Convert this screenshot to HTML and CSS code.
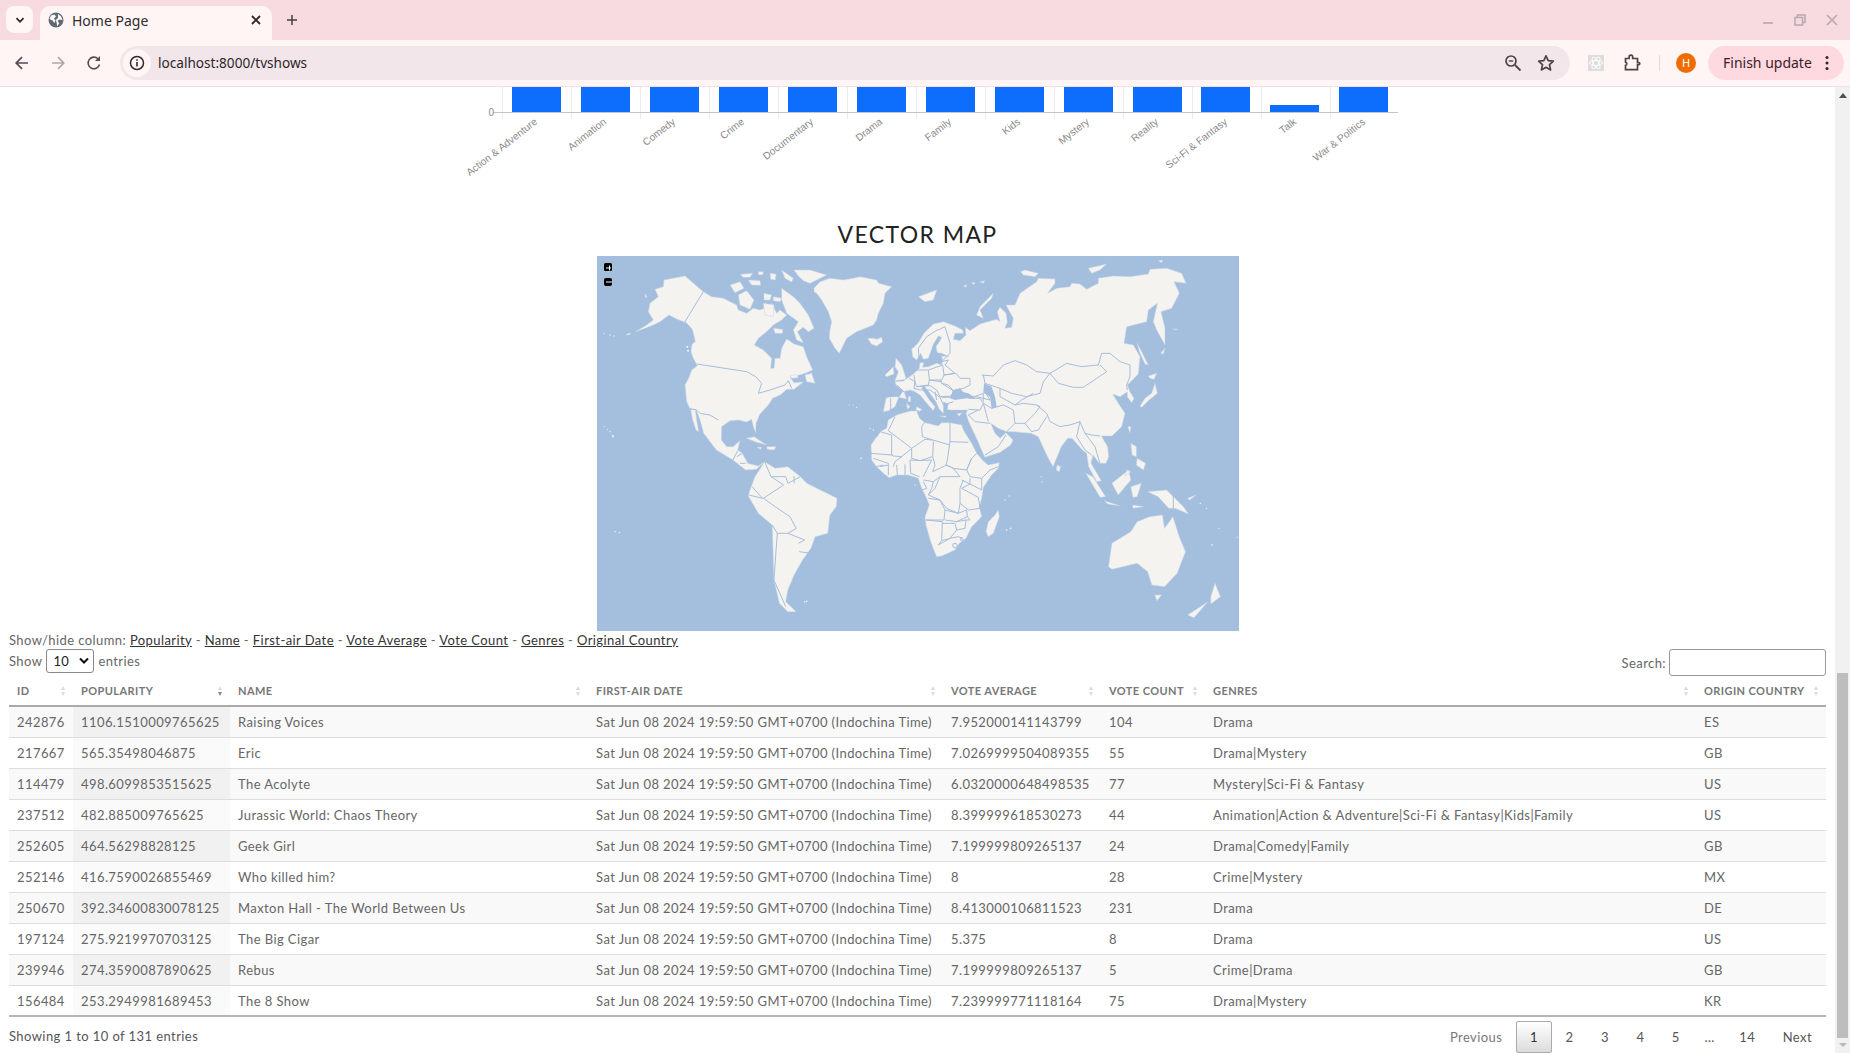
FILE: index.html
```html
<!DOCTYPE html>
<html lang="en">
<head>
<meta charset="utf-8">
<title>Home Page</title>
<link rel="stylesheet" href="styles.css">
</head>
<body>
<header class="chrome">
  <div class="tabstrip">
    <button class="tabsearch"><svg width="12" height="12" viewBox="0 0 12 12"><path d="M2.5 4.2 6 7.8l3.5-3.6" class="ic-b"/></svg></button>
    <div class="tab">
      <svg class="globe" width="16" height="16" viewBox="0 0 16 16"><circle cx="8" cy="8" r="7.5" fill="#5f6b73"/><path d="M3 3.5 6.5 2.5 8 4.5 6 6.5 7.5 8.5 6.5 11 4.5 8.5 1.5 7ZM10 2l3 2.2 1.6 4-2.6-.7-2.4.9 1.6 3.2-2 2.6-.6-3.6L7.8 8 10 6Z" fill="#fff5f5"/></svg>
      <span class="tab-title">Home Page</span>
      <svg class="tab-x" width="10" height="10" viewBox="0 0 10 10"><path d="M1 1l8 8M9 1 1 9" class="ic-b"/></svg>
    </div>
    <svg class="plus" width="12" height="12" viewBox="0 0 12 12"><path d="M6 1v10M1 6h10" stroke="#4a3f43" stroke-width="1.5" fill="none"/></svg>
    <div class="winctl">
      <svg width="12" height="12" viewBox="0 0 12 12"><path d="M1 9h10" stroke="#b9a9ad" stroke-width="1.6"/></svg>
      <svg width="12" height="12" viewBox="0 0 12 12"><path d="M3.5 1h7.5v7.5H8.5V11H1V3.5h2.5Z M3.5 3.5h5v5" fill="none" stroke="#b9a9ad" stroke-width="1.5"/></svg>
      <svg width="12" height="12" viewBox="0 0 12 12"><path d="M1 1l10 10M11 1 1 11" stroke="#b9a9ad" stroke-width="1.6"/></svg>
    </div>
  </div>
  <div class="toolbar">
    <svg class="nav" width="16" height="16" viewBox="0 0 16 16"><path d="M14 8H2.5M8 2.2 2.2 8 8 13.8" fill="none" stroke="#5b4a50" stroke-width="1.7"/></svg>
    <svg class="nav" width="16" height="16" viewBox="0 0 16 16"><path d="M2 8h11.5M8 2.2 13.8 8 8 13.8" fill="none" stroke="#b3a5a9" stroke-width="1.7"/></svg>
    <svg class="nav" width="16" height="16" viewBox="0 0 16 16"><path d="M13.5 9.5A5.8 5.8 0 1 1 12 3.8" fill="none" stroke="#5b4a50" stroke-width="1.6"/><path d="M14 1v5H9Z" fill="#5b4a50"/></svg>
    <div class="omnibox">
      <span class="site-info"><svg width="16" height="16" viewBox="0 0 16 16"><circle cx="8" cy="8" r="6.5" fill="none" stroke="#2f2a2c" stroke-width="1.5"/><path d="M8 7v4.5M8 4.2v1.6" stroke="#2f2a2c" stroke-width="1.6"/></svg></span>
      <span class="url">localhost:8000/tvshows</span>
      <svg class="omni-zoom" width="18" height="18" viewBox="0 0 18 18"><circle cx="7" cy="7" r="5" fill="none" stroke="#4d4347" stroke-width="1.7"/><path d="M11 11l5.5 5.5" stroke="#4d4347" stroke-width="1.8"/><path d="M4.8 7h4.4" stroke="#4d4347" stroke-width="1.4"/></svg>
      <svg class="omni-star" width="18" height="18" viewBox="0 0 18 18"><path d="M9 1.8l2.2 4.8 5.2.6-3.9 3.5 1.1 5.2L9 13.3l-4.6 2.6 1.1-5.2L1.600 7.200l5.200-.6Z" fill="none" stroke="#4d4347" stroke-width="1.7" stroke-linejoin="round"/></svg>
    </div>
    <span class="ext"><svg width="16" height="16" viewBox="0 0 16 16"><rect width="16" height="16" fill="#dedcdc"/><g fill="none" stroke="#fff" stroke-width=".9"><ellipse cx="8" cy="8" rx="6.500" ry="2.600"/><ellipse cx="8" cy="8" rx="6.500" ry="2.600" transform="rotate(60 8 8)"/><ellipse cx="8" cy="8" rx="6.500" ry="2.600" transform="rotate(120 8 8)"/></g></svg></span>
    <svg class="puzzle" width="18" height="18" viewBox="0 0 18 18"><path d="M2.500 4.500h3.600V3a1.800 1.800 0 0 1 3.600 0v1.500h4.800v4h1.200a1.100 1.100 0 0 1 0 2.200h-1.200v5H2.500v-4.200a1.700 1.700 0 0 0 0-3.300Z" fill="none" stroke="#4d4347" stroke-width="1.700"/></svg>
    <span class="sep"></span>
    <span class="avatar">H</span>
    <span class="update"><span>Finish update</span><svg width="4" height="16" viewBox="0 0 4 16"><circle cx="2" cy="2.500" r="1.500"/><circle cx="2" cy="8" r="1.500"/><circle cx="2" cy="13.500" r="1.500"/></svg></span>
  </div>
</header>

<div class="viewport">
  <main class="page">
    <svg class="chart" width="1835" height="103" viewBox="0 87 1835 103">
      <g class="grid">
        <path d="M502.500 87V119M571.500 87V119M640.500 87V119M709.500 87V119M778.500 87V119M847.500 87V119M916.500 87V119M985.500 87V119M1054.500 87V119M1123.500 87V119M1192.500 87V119M1261.500 87V119M1330.500 87V119"/>
      </g>
      <path class="axis" d="M493 112.500H1398"/>
      <g class="bars">
        <rect x="512" y="87" width="49" height="25"/><rect x="581" y="87" width="49" height="25"/><rect x="650" y="87" width="49" height="25"/><rect x="719" y="87" width="49" height="25"/><rect x="788" y="87" width="49" height="25"/><rect x="857" y="87" width="49" height="25"/><rect x="926" y="87" width="49" height="25"/><rect x="995" y="87" width="49" height="25"/><rect x="1064" y="87" width="49" height="25"/><rect x="1133" y="87" width="49" height="25"/><rect x="1201" y="87" width="49" height="25"/><rect x="1270" y="105" width="49" height="7"/><rect x="1339" y="87" width="49" height="25"/>
      </g>
      <g class="labels">
        <text x="494" y="116" class="zero">0</text>
        <text transform="translate(538 123) rotate(-38)">Action &amp; Adventure</text>
        <text transform="translate(607 123) rotate(-38)">Animation</text>
        <text transform="translate(676 123) rotate(-38)">Comedy</text>
        <text transform="translate(745 123) rotate(-38)">Crime</text>
        <text transform="translate(814 123) rotate(-38)">Documentary</text>
        <text transform="translate(883 123) rotate(-38)">Drama</text>
        <text transform="translate(952 123) rotate(-38)">Family</text>
        <text transform="translate(1021 123) rotate(-38)">Kids</text>
        <text transform="translate(1090 123) rotate(-38)">Mystery</text>
        <text transform="translate(1159 123) rotate(-38)">Reality</text>
        <text transform="translate(1228 123) rotate(-38)">Sci-Fi &amp; Fantasy</text>
        <text transform="translate(1297 123) rotate(-38)">Talk</text>
        <text transform="translate(1366 123) rotate(-38)">War &amp; Politics</text>
      </g>
    </svg>

    <h2 class="map-title">VECTOR MAP</h2>
    <div class="map-wrap">
      <svg class="map" width="642" height="375" viewBox="597 256 642 375">
        <rect x="597" y="256" width="642" height="375" class="water"/>
        <!-- Americas, Greenland: 3x crop coordinates from x=590,y=250 -->
        <g transform="translate(590 250) scale(.33333)">
          <path class="land" d="M135,246 L165,235 L190,225 L210,215 L237,195 L262,208 L285,217 L298,228 L308,240 L316,275 L306,283 L303,305 L310,325 L322,347 L305,360 L296,385 L285,405 L290,455 L300,476 L320,482 L330,510 L341,550 L379,600 L429,630 L467,660 L499,658 L524,635 L505,648 L473,640 L457,610 L443,600 L450,572 L429,590 L410,590 L394,570 L395,530 L420,512 L445,510 L470,516 L485,508 L490,530 L497,548 L498,520 L510,492 L535,465 L548,445 L572,434 L590,418 L612,418 L640,396 L612,398 L600,382 L640,372 L668,360 L650,320 L640,290 L612,282 L590,267 L575,295 L570,325 L555,325 L552,355 L542,355 L545,325 L520,300 L493,285 L505,265 L530,245 L550,225 L575,210 L590,195 L570,180 L560,190 L545,160 L535,170 L510,180 L490,175 L470,190 L445,180 L440,165 L420,155 L400,145 L365,140 L340,125 L285,78 L222,90 L220,110 L195,118 L205,140 L180,160 L175,185 L190,210 L170,225 Z"/>
          <path class="land" d="M302,478 L316,480 L320,510 L326,545 L318,540 L308,510 Z"/>
          <path class="land" d="M575,115 L610,140 L630,160 L655,195 L672,235 L655,245 L640,232 L622,245 L640,278 L620,270 L610,240 L625,215 L590,190 L575,150 Z"/>
          <path class="land" d="M445,135 L470,122 L492,150 L480,178 L450,165 Z M420,105 L450,95 L462,115 L435,128 Z M452,73 L488,70 L480,82 L458,82 Z M475,90 L510,92 L512,106 L485,105 Z M505,65 L520,65 L518,74 L505,74 Z M540,70 L558,72 L556,90 L542,88 Z M575,60 L610,85 L605,96 L585,85 Z M612,60 L660,60 L710,75 L660,100 L640,92 L625,78 Z M522,130 L545,135 L540,150 L522,150 Z M550,140 L575,145 L570,155 L550,152 Z M520,160 L552,165 L550,200 L525,195 Z M550,235 L578,238 L578,250 L556,250 Z"/>
          <path class="land" d="M672,115 L690,95 L720,85 L760,90 L790,85 L810,80 L860,90 L866,100 L905,110 L885,130 L880,160 L865,190 L860,210 L850,225 L800,245 L770,265 L748,310 L735,295 L718,265 L720,240 L725,215 L715,185 L695,150 L680,130 L672,125 Z"/>
          <path class="land" d="M833,265 L850,265 L860,268 L875,262 L878,275 L860,288 L845,283 Z M645,375 L665,370 L675,400 L650,395 Z M165,132 L172,142 L166,142 Z M600,378 L620,373 L625,383 L605,385 Z"/>
          <path class="land" d="M470,565 L492,560 L530,585 L500,577 Z M530,590 L558,590 L552,600 L532,598 Z M502,592 L515,592 L512,598 Z"/>
          <path class="land" d="M918,325 L935,345 L945,375 L948,388 L915,392 L925,365 L915,350 Z M885,375 L910,350 L912,372 L890,380 Z"/>
          <g class="dots"><circle cx="42" cy="530" r="1.800"/><circle cx="52" cy="538" r="1.800"/><circle cx="60" cy="545" r="2"/><path d="M65 552l8 7-5 5Z"/><circle cx="42" cy="250" r="2"/><circle cx="60" cy="255" r="2"/><circle cx="72" cy="258" r="2"/><path d="M108 254l12-5 2 3-12 4Z"/><circle cx="292" cy="290" r="3"/><circle cx="294" cy="302" r="3"/><circle cx="778" cy="465" r="1.800"/><circle cx="790" cy="465" r="1.800"/><circle cx="800" cy="472" r="1.800"/></g>
          <path class="border" d="M340,125 L285,215 L298,230 L310,275 M320,342 L470,365 L497,380 L515,400 L505,430 L540,420 L585,405 L595,392 L605,415 M300,476 L320,480 L330,490 L360,495 L385,510 M443,602 L429,630 M457,610 L440,620 M467,640 L450,640"/>
        </g>
        <!-- Eurasia: 3x crop coordinates from x=900,y=250 -->
        <g transform="translate(900 250) scale(.33333)">
          <path class="land" d="M-35,442 L-10,440 L20,447 L12,425 L-12,405 L-15,395 L10,393 L22,385 L40,372 L58,355 L60,338 L72,338 L68,352 L85,350 L110,340 L125,345 L128,330 L125,318 L148,320 L125,310 L112,308 L108,290 L120,272 L125,262 L115,258 L100,283 L92,305 L85,325 L70,328 L62,310 L50,330 L38,320 L35,298 L55,278 L72,250 L100,222 L130,215 L165,228 L188,240 L190,250 L165,250 L160,268 L180,272 L198,255 L196,232 L210,242 L240,222 L290,208 L300,215 L292,185 L300,172 L318,190 L322,215 L315,235 L335,232 L340,205 L318,165 L345,165 L360,130 L410,95 L415,85 L465,87 L465,100 L443,130 L470,115 L510,110 L515,100 L540,102 L560,118 L595,100 L595,85 L640,78 L690,80 L745,72 L750,58 L800,55 L845,70 L858,100 L822,95 L838,130 L815,175 L783,185 L795,235 L795,285 L770,240 L760,215 L772,160 L745,180 L740,215 L680,230 L672,280 L700,285 L720,320 L715,372 L692,395 L682,405 L690,425 L702,445 L695,458 L682,440 L682,425 L660,440 L638,432 L655,460 L675,490 L665,530 L636,558 L604,558 L623,590 L626,620 L618,640 L598,640 L579,615 L573,640 L604,692 L590,695 L566,650 L560,610 L547,600 L534,585 L516,565 L503,565 L484,590 L459,650 L440,615 L415,560 L393,550 L340,545 L320,545 L295,535 L272,520 L285,550 L300,565 L318,548 L339,570 L332,585 L301,607 L254,622 L232,570 L206,515 L198,490 L203,480 L150,480 L142,478 L145,462 L130,455 L130,490 L118,478 L108,455 L90,430 L70,405 L65,415 L88,450 L105,470 L100,482 L85,465 L60,435 L45,425 L30,420 L8,425 L-5,445 L-15,470 L-35,482 L-50,485 L-42,445 Z"/>
          <path class="sea" d="M160,420 L180,415 L190,427 L205,430 L228,445 L200,445 L165,450 L150,445 Z M252,400 L275,410 L285,440 L290,470 L275,476 L270,440 L250,428 Z"/>
          <path class="land" d="M720,468 L735,445 L755,430 L765,400 L772,430 L745,452 L725,472 Z M745,378 L770,370 L762,388 L750,385 Z M712,280 L745,345 L735,342 L718,305 Z M782,310 L795,295 L790,312 Z M280,130 L240,170 L230,195 L250,205 L240,180 L275,145 Z M55,140 L110,120 L100,150 L75,155 Z M362,65 L375,60 L395,65 L415,70 L405,80 L370,75 Z M190,108 L200,104 L198,112 Z M215,98 L226,98 L220,104 Z M240,96 L254,92 L250,100 Z M565,55 L620,42 L600,60 L575,70 Z M775,33 L788,30 L785,38 Z M818,236 L832,238 L828,240 Z M20,460 L30,470 L22,478 Z M50,470 L65,478 L60,484 L48,480 Z M25,440 L32,440 L32,455 L25,455 Z M120,498 L140,498 L135,502 Z M170,492 L186,488 L178,498 Z"/>
          <path class="border" d="M245,375 L280,378 L310,345 L345,332 L380,345 L410,365 L450,370 L500,340 L545,350 L595,345 L605,310 L630,310 L660,335 L690,345 L690,380 L680,405 L682,420 M450,370 L475,400 L520,412 L550,412 L590,385 L620,365 L600,345 M250,375 L255,400 L300,415 L335,430 L380,440 L420,430 L430,395 L450,370 M300,415 L300,440 L345,465 L365,450 L400,430 M250,460 L275,475 L310,465 L340,480 L345,520 L320,545 M345,520 L375,520 L405,490 L420,470 L410,465 L370,460 L345,465 M410,465 L440,490 L450,515 L480,530 L510,525 L540,515 L555,550 L575,555 L600,558 M440,500 L415,540 L395,545 L375,520 M540,515 L530,560 L555,600 L575,615 M555,550 L585,590 L600,640 M205,478 L240,480 L250,460 L240,445 L205,445 M225,440 L250,430 L250,455 M205,495 L235,480 M205,495 L225,515 L270,520 M255,615 L295,590 L318,555 M250,460 L265,515 M-28,445 L-28,482 M-10,405 L12,425"/>
        </g>
        <!-- Europe borders: 3x crop coordinates from x=870,y=320 -->
        <g transform="translate(870 320) scale(.33333)">
          <path class="border" d="M118,175 L135,185 L132,205 L150,210 M135,150 L175,150 L178,180 L175,195 L140,200 L135,185 L132,165 M175,150 L218,135 L222,165 L215,180 L178,180 M215,125 L235,120 L225,135 L255,160 L222,165 M222,165 L258,160 L270,175 L300,175 L300,195 L280,205 L250,212 L235,195 L215,190 L213,180 M215,190 L250,212 L245,228 L210,230 L200,210 M178,180 L213,185 M140,200 L180,197 L200,210 M150,210 L180,210 M180,210 L210,232 L220,255 L250,245 M215,232 L245,232 M195,215 L200,240 M205,28 L170,50 L145,85 L148,125 M225,20 L240,70 L240,100 M205,30 L225,20 M215,125 L240,100 M310,228 L360,240 L345,215"/>
        </g>
        <!-- Africa: 3x crop coordinates from x=860,y=410 -->
        <g transform="translate(860 410) scale(.33333)">
          <path class="land" d="M85,30 L110,15 L150,3 L172,3 L180,25 L195,38 L235,48 L245,38 L270,38 L305,45 L310,60 L335,100 L350,130 L372,155 L385,165 L418,158 L415,175 L395,195 L370,232 L365,265 L358,290 L365,320 L335,350 L318,385 L298,400 L285,420 L245,438 L230,440 L225,428 L212,395 L198,345 L195,320 L208,285 L200,265 L185,235 L175,205 L145,195 L110,195 L88,203 L70,190 L50,170 L35,150 L33,105 L50,80 L60,65 L80,55 Z"/>
          <path class="land" d="M415,300 L418,320 L400,370 L385,380 L378,365 L385,335 L405,315 Z"/>
          <g class="dots"><circle cx="435" cy="270" r="2"/><circle cx="448" cy="258" r="2"/><circle cx="440" cy="360" r="2.500"/><circle cx="452" cy="355" r="2.500"/><circle cx="30" cy="55" r="2"/><circle cx="40" cy="60" r="2"/><circle cx="3" cy="145" r="2.500"/><circle cx="165" cy="225" r="2"/><circle cx="180" cy="208" r="2.500"/></g>
          <path class="border" d="M105,20 L85,62 L155,115 L195,88 L218,90 M172,5 L180,25 L195,35 L185,50 L187,80 L218,90 M270,38 L270,95 L325,97 M218,90 L270,105 M270,95 L262,150 L258,165 L280,175 L320,180 L335,145 L350,130 M220,95 L218,140 L225,165 L218,185 M155,115 L155,145 L180,152 L218,140 M33,130 L95,135 L95,75 M95,135 L100,138 L125,140 L155,115 M50,80 L60,65 L95,75 M40,145 L85,160 L85,195 M110,165 L112,195 M125,140 L105,155 L100,170 M135,163 L135,195 M150,150 L152,190 L178,200 M60,170 L85,165 M50,170 L70,165 M150,150 L180,152 L215,150 L190,200 M218,185 L260,165 L280,175 L300,200 L240,200 L220,215 L190,210 M320,180 L330,200 L365,205 L390,180 L415,170 M335,145 L320,180 M365,205 L365,240 L330,222 L330,205 M240,200 L225,235 L205,255 L240,270 L260,295 L295,310 L300,280 L300,235 L310,210 M305,210 L330,222 L305,235 M305,235 L355,262 L360,295 L325,300 L300,280 M205,265 L240,270 L255,300 L252,330 L198,330 M255,300 L295,310 L320,300 L322,320 L290,335 L255,330 M198,330 L247,335 L245,392 L235,405 M247,340 L285,340 M245,392 L270,385 L290,360 L285,340 M290,335 L318,330 L315,355 L290,360 M322,320 L330,330 L318,330 M235,405 L270,385 L295,380 L308,385 M190,215 L200,235 L185,240 M205,255 L215,235 L220,215"/>
          <circle cx="285" cy="407" r="7" class="border"/><circle cx="305" cy="388" r="4" class="border"/>
        </g>
        <!-- South America, Oceania: crop coordinates, x/2.376, y/3 from x=590,y=250 -->
        <g transform="translate(590 250) scale(.42088 .33333)">
          <path class="land" d="M380,720 L392,680 L415,635 L440,655 L470,650 L500,680 L515,700 L587,745 L585,770 L570,795 L565,850 L535,860 L525,895 L505,930 L485,975 L470,1020 L465,1055 L490,1085 L470,1085 L450,1060 L437,990 L433,825 L400,790 L376,738 Z"/>
          <path class="land" d="M1240,880 L1285,845 L1300,815 L1330,800 L1360,795 L1365,835 L1385,800 L1400,860 L1415,905 L1395,970 L1365,1010 L1335,1005 L1325,965 L1300,940 L1240,958 L1232,950 Z M1342,1035 L1358,1035 L1347,1052 Z M1485,1000 L1498,1040 L1475,1062 L1475,1040 Z M1468,1055 L1435,1103 L1420,1095 L1445,1075 Z"/>
          <path class="land" d="M1178,670 L1195,680 L1225,740 L1212,742 Z M1222,752 L1260,768 L1230,762 Z M1240,700 L1280,660 L1285,690 L1255,735 Z M1285,710 L1310,700 L1300,740 L1290,742 Z M1325,725 L1370,720 L1410,770 L1422,792 L1390,775 L1375,775 L1350,740 Z M1285,580 L1298,590 L1298,620 L1288,615 Z M1300,625 L1320,640 L1315,660 L1298,645 Z M1278,530 L1285,530 L1283,548 Z M1110,645 L1118,650 L1115,665 L1108,660 Z M1275,660 L1285,665 L1272,678 Z M1290,765 L1315,770 L1290,775 Z M1420,745 L1440,735 L1425,750 Z"/>
          <path class="border" d="M415,635 L430,680 L460,705 L412,745 M412,745 L440,770 L475,800 L490,835 L470,850 L445,850 L433,825 M430,680 L465,680 L470,700 L500,680 M485,678 L485,700 M470,850 L510,870 L495,880 M497,905 L525,910 M385,710 L410,745 L378,735 M445,850 L437,990 L465,1070 M1386,725 L1386,775"/>
          <g class="dots"><circle cx="1072" cy="680" r="1.600"/><circle cx="1074" cy="695" r="1.600"/><circle cx="60" cy="845" r="2"/><circle cx="70" cy="848" r="2"/><circle cx="510" cy="1056" r="2.200"/><circle cx="515" cy="1054" r="2.200"/><circle cx="1450" cy="760" r="1.800"/><circle cx="1465" cy="775" r="1.800"/><circle cx="1478" cy="885" r="2.200"/><circle cx="1495" cy="835" r="1.500"/><circle cx="1538" cy="862" r="1.500"/></g>
        </g>
        <g class="zoomctl">
          <rect x="604" y="263" width="8" height="8" rx="1.500"/><path d="M606 268h5M609.500 265.500v5"/>
          <rect x="604" y="278" width="8" height="8" rx="2"/><path d="M606 282h6"/>
        </g>
      </svg>
    </div>

    <p class="toggle">Show/hide column: <a>Popularity</a> - <a>Name</a> - <a>First-air Date</a> - <a>Vote Average</a> - <a>Vote Count</a> - <a>Genres</a> - <a>Original Country</a></p>

    <div class="dt-top">
      <label class="dt-len">Show <span class="select"><span>10</span><svg width="10" height="8" viewBox="0 0 10 8"><path d="M1 1.500 5 5.500 9 1.500" fill="none" stroke="#111" stroke-width="2"/></svg></span> entries</label>
      <label class="dt-search">Search: <span class="input"></span></label>
    </div>

    <table class="dt">
      <colgroup><col class="c1"><col class="c2"><col class="c3"><col class="c4"><col class="c5"><col class="c6"><col class="c7"><col class="c8"></colgroup>
      <thead><tr>
        <th class="s">ID</th><th class="s desc">Popularity</th><th class="s">Name</th><th class="s">First-air Date</th><th class="s">Vote Average</th><th class="s">Vote Count</th><th class="s">Genres</th><th class="s">Origin Country</th>
      </tr></thead>
      <tbody>
        <tr><td>242876</td><td class="sorted">1106.1510009765625</td><td>Raising Voices</td><td>Sat Jun 08 2024 19:59:50 GMT+0700 (Indochina Time)</td><td>7.952000141143799</td><td>104</td><td>Drama</td><td>ES</td></tr>
        <tr><td>217667</td><td class="sorted">565.35498046875</td><td>Eric</td><td>Sat Jun 08 2024 19:59:50 GMT+0700 (Indochina Time)</td><td>7.0269999504089355</td><td>55</td><td>Drama|Mystery</td><td>GB</td></tr>
        <tr><td>114479</td><td class="sorted">498.6099853515625</td><td>The Acolyte</td><td>Sat Jun 08 2024 19:59:50 GMT+0700 (Indochina Time)</td><td>6.0320000648498535</td><td>77</td><td>Mystery|Sci-Fi &amp; Fantasy</td><td>US</td></tr>
        <tr><td>237512</td><td class="sorted">482.885009765625</td><td>Jurassic World: Chaos Theory</td><td>Sat Jun 08 2024 19:59:50 GMT+0700 (Indochina Time)</td><td>8.399999618530273</td><td>44</td><td>Animation|Action &amp; Adventure|Sci-Fi &amp; Fantasy|Kids|Family</td><td>US</td></tr>
        <tr><td>252605</td><td class="sorted">464.56298828125</td><td>Geek Girl</td><td>Sat Jun 08 2024 19:59:50 GMT+0700 (Indochina Time)</td><td>7.199999809265137</td><td>24</td><td>Drama|Comedy|Family</td><td>GB</td></tr>
        <tr><td>252146</td><td class="sorted">416.7590026855469</td><td>Who killed him?</td><td>Sat Jun 08 2024 19:59:50 GMT+0700 (Indochina Time)</td><td>8</td><td>28</td><td>Crime|Mystery</td><td>MX</td></tr>
        <tr><td>250670</td><td class="sorted">392.34600830078125</td><td>Maxton Hall - The World Between Us</td><td>Sat Jun 08 2024 19:59:50 GMT+0700 (Indochina Time)</td><td>8.413000106811523</td><td>231</td><td>Drama</td><td>DE</td></tr>
        <tr><td>197124</td><td class="sorted">275.9219970703125</td><td>The Big Cigar</td><td>Sat Jun 08 2024 19:59:50 GMT+0700 (Indochina Time)</td><td>5.375</td><td>8</td><td>Drama</td><td>US</td></tr>
        <tr><td>239946</td><td class="sorted">274.3590087890625</td><td>Rebus</td><td>Sat Jun 08 2024 19:59:50 GMT+0700 (Indochina Time)</td><td>7.199999809265137</td><td>5</td><td>Crime|Drama</td><td>GB</td></tr>
        <tr><td>156484</td><td class="sorted">253.2949981689453</td><td>The 8 Show</td><td>Sat Jun 08 2024 19:59:50 GMT+0700 (Indochina Time)</td><td>7.239999771118164</td><td>75</td><td>Drama|Mystery</td><td>KR</td></tr>
      </tbody>
    </table>

    <div class="dt-bottom">
      <span class="dt-info">Showing 1 to 10 of 131 entries</span>
      <nav class="pager"><a class="p-prev">Previous</a><a class="p-cur">1</a><a>2</a><a>3</a><a>4</a><a>5</a><span class="p-dots">…</span><a class="p-last">14</a><a class="p-next">Next</a></nav>
    </div>
  </main>
  <aside class="scrollbar">
    <span class="sb-up"></span>
    <span class="sb-thumb"></span>
    <span class="sb-down"></span>
  </aside>
</div>
</body>
</html>
```
FILE: styles.css
```css
* { box-sizing: border-box; }
html, body { margin: 0; height: 100%; overflow: hidden; background: #fff; }
body { display: flex; flex-direction: column; height: 1053px; font-family: "Lato", "Noto Sans", sans-serif; color: #666; }

/* browser chrome */
.chrome { font-family: "Noto Sans", "Open Sans", sans-serif; flex: none; }
.tabstrip { height: 40px; background: #f7dbe0; display: flex; align-items: flex-start; padding: 6px 0 0 6px; }
.tabsearch { width: 27px; height: 27px; border: 0; padding: 0; border-radius: 8px; background: #fff6f6; display: flex; align-items: center; justify-content: center; }
.ic-b { fill: none; stroke: #2f2628; stroke-width: 1.8; }
.tab { width: 232px; height: 34px; margin-left: 7px; background: #fff5f5; border-radius: 10px 10px 0 0; display: flex; align-items: center; padding: 0 11px 6px 8px; }
.globe { margin-right: 8px; }
.tab-title { font-size: 14px; color: #302b2d; flex: 1; }
.plus { margin: 8px 0 0 14px; }
.winctl { margin-left: auto; display: flex; gap: 20px; padding: 8px 12px 0 0; }
.toolbar { height: 47px; background: #fff5f5; border-bottom: 1px solid #f5dde1; display: flex; align-items: center; padding: 0 6px 1px 14px; }
.nav { margin-right: 20px; }
.omnibox { width: 1450px; height: 34px; margin-left: -2px; background: #f3e6ea; border-radius: 17px; display: flex; align-items: center; padding-left: 3px; }
.site-info { width: 28px; height: 28px; border-radius: 50%; background: #fff5f5; display: flex; align-items: center; justify-content: center; }
.url { font-size: 13.6px; color: #2c2729; margin-left: 7px; flex: 1; }
.omni-zoom { margin-right: 15px; }
.omni-star { margin-right: 15px; }
.ext { margin-left: 18px; width: 16px; height: 16px; display: flex; }
.puzzle { margin-left: 19px; }
.sep { width: 1px; height: 16px; background: #f5d3da; margin-left: 18px; }
.avatar { width: 20px; height: 20px; margin-left: 16px; border-radius: 50%; background: #ef6c00; color: #fff; font-size: 11px; display: flex; align-items: center; justify-content: center; }
.update { margin-left: 12px; width: 136px; height: 34px; border-radius: 17px; background: #ffd9e0; color: #3d1c25; font-size: 14px; display: flex; align-items: center; justify-content: space-between; padding: 0 15px; }
.update svg { fill: #3d1c25; }

/* viewport */
.viewport { flex: 1; min-height: 0; display: flex; overflow: hidden; }
.page { flex: 1; min-width: 0; padding: 0 9px; font-size: 13px; letter-spacing: .42px; }
.scrollbar { width: 15px; flex: none; background: #f1f1f1; display: flex; flex-direction: column; align-items: center; }
.sb-up { margin-top: 6px; border: 4.5px solid transparent; border-top: 0; border-bottom: 5px solid #505050; }
.sb-thumb { width: 11px; height: 365px; margin-top: 575px; background: #bdbdbd; }
.sb-down { margin-top: 5px; border: 4px solid transparent; border-bottom: 0; border-top: 4px solid #b8b8b8; }

/* chart */
.chart { display: block; margin-left: -9px; }
.grid path { stroke: #ececec; stroke-width: 1; fill: none; }
.axis { stroke: #bfc5d0; stroke-width: 1; fill: none; }
.bars rect { fill: #0d6efd; }
.labels text { font-family: "Liberation Sans", Arial, sans-serif; font-size: 10.200px; fill: #8a8a8a; text-anchor: end; letter-spacing: 0; }
.labels .zero { font-size: 10px; }

/* map */
.map-title { margin: 30px 0 0; height: 36px; font-size: 23px; line-height: 28px; font-weight: 400; color: #222; letter-spacing: 1.400px; text-align: center; }
.map-wrap { display: flex; justify-content: center; padding-left: 1px; }
.map { display: block; flex: none; }
.water { fill: #a4bedd; }
.land { fill: #f4f3f0; stroke: #c9d5e6; stroke-width: .5; vector-effect: non-scaling-stroke; }
.sea { fill: #a4bedd; stroke: none; }
.border { fill: none; stroke: #a7bedb; stroke-width: 1; vector-effect: non-scaling-stroke; }
.dots { fill: #f4f3f0; }
.zoomctl rect { fill: #000; }
.zoomctl path { stroke: #fff; stroke-width: 1; fill: none; }

/* datatable */
.toggle { margin: 0; height: 18px; line-height: 18px; color: #666; }
.toggle a { color: #333; text-decoration: underline; }
.dt-top { display: flex; justify-content: space-between; align-items: flex-start; height: 27px; }
.dt-len, .dt-search { display: flex; align-items: center; gap: 4px; }
.dt-len { height: 24px; }
.dt-search { height: 27px; gap: 3px; }
.select { width: 48px; height: 24px; border: 1px solid #888; border-radius: 3px; display: flex; align-items: center; justify-content: space-between; padding: 0 4px 0 6px; color: #222; background: #fff; }
.input { width: 157px; height: 27px; border: 1px solid #999; border-radius: 3px; background: #fff; }
.dt { width: 1817px; table-layout: fixed; border-collapse: separate; border-spacing: 0; }
.c1 { width: 64px; } .c2 { width: 157px; } .c3 { width: 358px; } .c4 { width: 355px; }
.c5 { width: 158px; } .c6 { width: 104px; } .c7 { width: 491px; } .c8 { width: 130px; }
.dt th { height: 31px; padding: 0 8px; text-align: left; font-size: 11px; font-weight: 700; text-transform: uppercase; color: #777; border-bottom: 2px solid #aaa; position: relative; white-space: nowrap; }
.dt td { height: 31px; padding: 0 8px; border-bottom: 1px solid #ddd; white-space: nowrap; overflow: hidden; }
.dt tbody tr:last-child td { border-bottom: 2px solid #b5b5b5; }
.dt tbody tr:nth-child(odd) td { background: #f9f9f9; }
.dt tbody tr:nth-child(odd) td.sorted { background: #f1f1f1; }
.dt tbody tr:nth-child(even) td.sorted { background: #fafafa; }
.s::before, .s::after { content: ""; position: absolute; right: 8px; border-left: 2.5px solid transparent; border-right: 2.5px solid transparent; }
.s::before { top: 10px; border-bottom: 4px solid #dcdcdc; }
.s::after { top: 16px; border-top: 4px solid #dcdcdc; }
.desc::after { border-top-color: #888; }
.dt-bottom { display: flex; justify-content: space-between; align-items: flex-start; padding-top: 4px; }
.dt-info { padding-top: 7px; color: #555; }
.pager { display: flex; align-items: center; height: 32px; color: #555; }
.pager a { padding: 0 13.750px; line-height: 32px; }
.p-dots { padding: 0 11px; line-height: 32px; }
.pager .p-prev { color: #777; padding: 0 14px; }
.pager .p-last { padding: 0 13.500px; }
.pager .p-next { padding: 0 14px; }
.pager .p-cur { padding: 0 12.750px; border: 1px solid #aaa; border-radius: 2px; background: linear-gradient(#fff, #dcdcdc); color: #333; height: 32px; line-height: 30px; }
```
